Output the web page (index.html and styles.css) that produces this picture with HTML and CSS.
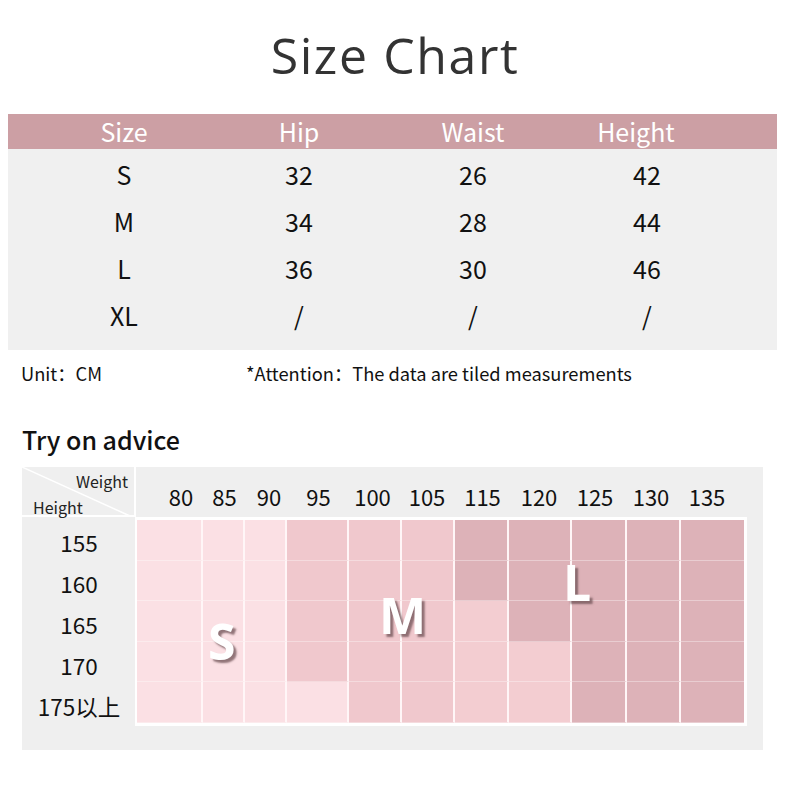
FILE: index.html
```html
<!DOCTYPE html>
<html lang="en">
<head>
<meta charset="utf-8">
<title>Size Chart</title>
<link rel="stylesheet" href="styles.css">
</head>
<body>
<h1 class="title">Size Chart</h1>

<section class="size-table">
  <div class="st-head">
    <span>Size</span><span>Hip</span><span>Waist</span><span>Height</span>
  </div>
  <div class="st-body">
    <div class="st-row"><span>S</span><span>32</span><span>26</span><span>42</span></div>
    <div class="st-row"><span>M</span><span>34</span><span>28</span><span>44</span></div>
    <div class="st-row"><span>L</span><span>36</span><span>30</span><span>46</span></div>
    <div class="st-row"><span>XL</span><span>/</span><span>/</span><span>/</span></div>
  </div>
</section>

<div class="notes">
  <span class="unit">Unit：CM</span>
  <span class="attention">*Attention：The data are tiled measurements</span>
</div>

<h2 class="advice-title">Try on advice</h2>

<section class="advice">
  <div class="corner">
    <svg class="diag" width="113" height="50" viewBox="0 0 113 50"><line x1="0" y1="0" x2="108" y2="49" stroke="#ffffff" stroke-width="1.5"/></svg>
    <span class="c-weight">Weight</span>
    <span class="c-height">Height</span>
  </div>
  <div class="weights">
    <span>80</span><span>85</span><span>90</span><span>95</span><span>100</span><span>105</span><span>115</span><span>120</span><span>125</span><span>130</span><span>135</span>
  </div>
  <div class="heights">
    <span>155</span><span>160</span><span>165</span><span>170</span><span>175以上</span>
  </div>
  <div class="grid-wrap">
    <div class="grid">
      <!-- row 155 -->
      <i class="s"></i><i class="s"></i><i class="s"></i><i class="m"></i><i class="m"></i><i class="m"></i><i class="l"></i><i class="l"></i><i class="l"></i><i class="l"></i><i class="l"></i>
      <!-- row 160 -->
      <i class="s"></i><i class="s"></i><i class="s"></i><i class="m"></i><i class="m"></i><i class="m"></i><i class="l"></i><i class="l"></i><i class="l"></i><i class="l"></i><i class="l"></i>
      <!-- row 165 -->
      <i class="s"></i><i class="s"></i><i class="s"></i><i class="m"></i><i class="m"></i><i class="m"></i><i class="ml"></i><i class="l"></i><i class="l"></i><i class="l"></i><i class="l"></i>
      <!-- row 170 -->
      <i class="s"></i><i class="s"></i><i class="s"></i><i class="m"></i><i class="m"></i><i class="m"></i><i class="ml"></i><i class="ml"></i><i class="l"></i><i class="l"></i><i class="l"></i>
      <!-- row 175 -->
      <i class="s"></i><i class="s"></i><i class="s"></i><i class="s2"></i><i class="m"></i><i class="m"></i><i class="ml"></i><i class="ml"></i><i class="l"></i><i class="l"></i><i class="l"></i>
    </div>
    <span class="big big-s">S</span>
    <span class="big big-m">M</span>
    <span class="big big-l">L</span>
  </div>
  <div class="bottom-pad"></div>
</section>
</body>
</html>
```

FILE: styles.css
```css
* { box-sizing: border-box; }

body {
  margin: 0;
  background: #ffffff;
  color: #222222;
  font-family: "Noto Sans CJK SC", "Noto Sans", sans-serif;
}

.title {
  margin: 0;
  padding-top: 20px;
  height: 114px;
  text-align: center;
  font-family: "Open Sans", "Noto Sans", sans-serif;
  font-weight: 400;
  font-size: 50px;
  line-height: 70px;
  letter-spacing: 1.6px;
  color: #333333;
}

.size-table {
  margin: 0 13px 0 8px;
}

.st-head,
.st-row {
  display: grid;
  grid-template-columns: 176px 174px 174px 174px;
  padding-left: 28px;
}

.st-head {
  height: 35px;
  background: #cc9fa4;
  color: #ffffff;
  font-size: 25px;
  line-height: 35px;
}

.st-head span,
.st-row span {
  text-align: center;
}

.st-head span:last-child { transform: translateX(-11px); }

.st-body {
  background: #f0f0f0;
  padding: 2px 0 11px;
}

.st-row {
  height: 47px;
  line-height: 47px;
  font-size: 25px;
  color: #111111;
}

.notes {
  display: flex;
  height: 48px;
  padding-bottom: 2px;
  align-items: center;
  font-size: 18.3px;
  color: #111111;
}

.unit {
  margin-left: 21px;
  width: 225px;
}

.advice-title {
  margin: 0;
  padding-top: 25px;
  padding-left: 22px;
  font-size: 25px;
  font-weight: 500;
  line-height: 32px;
  height: 69px;
  color: #111111;
}

.advice {
  margin-left: 22px;
  width: 741px;
  background: #efefef;
  display: grid;
  grid-template-columns: 114px 627px;
  grid-template-rows: 50px 208px 25px;
}

.corner {
  position: relative;
  border-right: 2px solid #ffffff;
  border-bottom: 2px solid #ffffff;
  font-size: 16px;
  color: #222222;
}

.diag {
  position: absolute;
  left: 0;
  top: 0;
}

.c-weight {
  position: absolute;
  right: 6px;
  top: 3px;
  line-height: 22px;
}

.c-height {
  position: absolute;
  left: 11px;
  top: 29px;
  line-height: 22px;
}

.weights {
  display: grid;
  grid-template-columns: 44px 43px 46px 53px 55px 54px 57px 56px 56px 56px 56px;
  padding-left: 23px;
  padding-top: 16px;
  font-size: 22px;
  line-height: 26px;
  color: #111111;
}

.weights span { text-align: center; }

.heights {
  display: grid;
  grid-template-rows: repeat(5, 41px);
  padding-top: 5px;
  font-size: 22.5px;
  line-height: 41px;
  text-align: center;
  color: #111111;
}

.grid-wrap {
  position: relative;
  width: 612px;
  height: 209px;
  margin-left: -1px;
  background: #ffffff;
  padding: 3px 2px 3px 2px;
}

.grid {
  display: grid;
  grid-template-columns: 66px 42px 42px 62px 53px 53px 54px 63px 55px 54px 63px;
  grid-template-rows: repeat(5, 40.6px);
  height: 203px;
}

.grid i {
  display: block;
  border-right: 2px solid #fff6f7;
  border-bottom: 1px solid rgba(255, 255, 255, 0.35);
}

.grid i:nth-child(11n) { border-right: none; }

.grid i.s { background: #fbe0e4; }
.grid i.s2 { background: #fbe0e4; }
.grid i.m { background: #f0c8cd; }
.grid i.ml { background: #f3cdd1; }
.grid i.l { background: #ddb2b8; }

.big {
  position: absolute;
  font-family: "Open Sans", "Noto Sans", sans-serif;
  font-weight: 700;
  font-size: 50px;
  line-height: 50px;
  color: #ffffff;
  text-shadow: 3px 3px 2px rgba(110, 80, 84, 0.75);
}

.big-s { left: 73px; top: 99px; }
.big-m { left: 244px; top: 73px; }
.big-l { left: 428px; top: 40px; }

.bottom-pad { grid-column: 1 / 3; }
```
